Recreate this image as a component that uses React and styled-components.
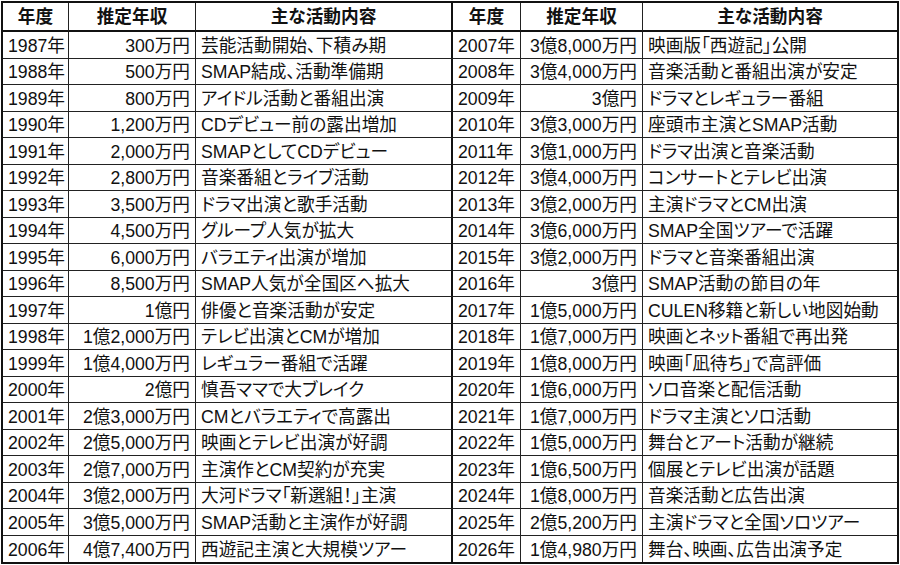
import React from "react";
import styled, { createGlobalStyle } from "styled-components";

const rows = [
  ["1987年", "300万円", "芸能活動開始、下積み期", "2007年", "3億8,000万円", "映画版「西遊記」公開"],
  ["1988年", "500万円", "SMAP結成、活動準備期", "2008年", "3億4,000万円", "音楽活動と番組出演が安定"],
  ["1989年", "800万円", "アイドル活動と番組出演", "2009年", "3億円", "ドラマとレギュラー番組"],
  ["1990年", "1,200万円", "CDデビュー前の露出増加", "2010年", "3億3,000万円", "座頭市主演とSMAP活動"],
  ["1991年", "2,000万円", "SMAPとしてCDデビュー", "2011年", "3億1,000万円", "ドラマ出演と音楽活動"],
  ["1992年", "2,800万円", "音楽番組とライブ活動", "2012年", "3億4,000万円", "コンサートとテレビ出演"],
  ["1993年", "3,500万円", "ドラマ出演と歌手活動", "2013年", "3億2,000万円", "主演ドラマとCM出演"],
  ["1994年", "4,500万円", "グループ人気が拡大", "2014年", "3億6,000万円", "SMAP全国ツアーで活躍"],
  ["1995年", "6,000万円", "バラエティ出演が増加", "2015年", "3億2,000万円", "ドラマと音楽番組出演"],
  ["1996年", "8,500万円", "SMAP人気が全国区へ拡大", "2016年", "3億円", "SMAP活動の節目の年"],
  ["1997年", "1億円", "俳優と音楽活動が安定", "2017年", "1億5,000万円", "CULEN移籍と新しい地図始動"],
  ["1998年", "1億2,000万円", "テレビ出演とCMが増加", "2018年", "1億7,000万円", "映画とネット番組で再出発"],
  ["1999年", "1億4,000万円", "レギュラー番組で活躍", "2019年", "1億8,000万円", "映画「凪待ち」で高評価"],
  ["2000年", "2億円", "慎吾ママで大ブレイク", "2020年", "1億6,000万円", "ソロ音楽と配信活動"],
  ["2001年", "2億3,000万円", "CMとバラエティで高露出", "2021年", "1億7,000万円", "ドラマ主演とソロ活動"],
  ["2002年", "2億5,000万円", "映画とテレビ出演が好調", "2022年", "1億5,000万円", "舞台とアート活動が継続"],
  ["2003年", "2億7,000万円", "主演作とCM契約が充実", "2023年", "1億6,500万円", "個展とテレビ出演が話題"],
  ["2004年", "3億2,000万円", "大河ドラマ「新選組！」主演", "2024年", "1億8,000万円", "音楽活動と広告出演"],
  ["2005年", "3億5,000万円", "SMAP活動と主演作が好調", "2025年", "2億5,200万円", "主演ドラマと全国ソロツアー"],
  ["2006年", "4億7,400万円", "西遊記主演と大規模ツアー", "2026年", "1億4,980万円", "舞台、映画、広告出演予定"],
];

const headers = ["年度", "推定年収", "主な活動内容", "年度", "推定年収", "主な活動内容"];

const GlobalStyle = createGlobalStyle`
  html, body {
    margin: 0;
    padding: 0;
    background: #fff;
  }
  body {
    font-family: "Liberation Sans", "Noto Sans CJK JP", Arial, sans-serif;
    color: #111;
  }
`;

const Page = styled.div`
  padding: 1px 0 0 1px;
`;

const Grid = styled.div`
  display: grid;
  width: 898px;
  box-sizing: border-box;
  grid-template-columns: 66px 127px 257px 68px 122px 254px;
  grid-template-rows: 29px repeat(20, 26.5px);
  border: 2px solid #111;
`;

const Cell = styled.div`
  box-sizing: border-box;
  display: flex;
  align-items: center;
  justify-content: ${({ $align }) =>
    $align === "right" ? "flex-end" : $align === "center" ? "center" : "flex-start"};
  padding: 2px 5px 0 5px;
  font-size: 18px;
  font-size-adjust: ex-height 0.519;
  font-feature-settings: "palt";
  line-height: 1;
  white-space: nowrap;
  overflow: hidden;
  border-right: ${({ $col }) =>
    $col === 5 ? "none" : $col === 2 ? "2px solid #111" : "1px solid #222"};
  border-bottom: ${({ $last }) => ($last ? "none" : "1px solid #222")};
`;

const HeadCell = styled(Cell)`
  font-weight: bold;
  border-bottom: 2px solid #111;
  padding-top: 0;
`;

const align = ["left", "right", "left", "left", "right", "left"];

export default function App() {
  return (
    <Page>
      <GlobalStyle />
      <Grid>
        {headers.map((h, i) => (
          <HeadCell key={"h" + i} $col={i} $align="center">
            {h}
          </HeadCell>
        ))}
        {rows.map((r, ri) =>
          r.map((v, ci) => (
            <Cell
              key={ri + "-" + ci}
              $col={ci}
              $align={align[ci]}
              $last={ri === rows.length - 1}
            >
              {v}
            </Cell>
          ))
        )}
      </Grid>
    </Page>
  );
}
